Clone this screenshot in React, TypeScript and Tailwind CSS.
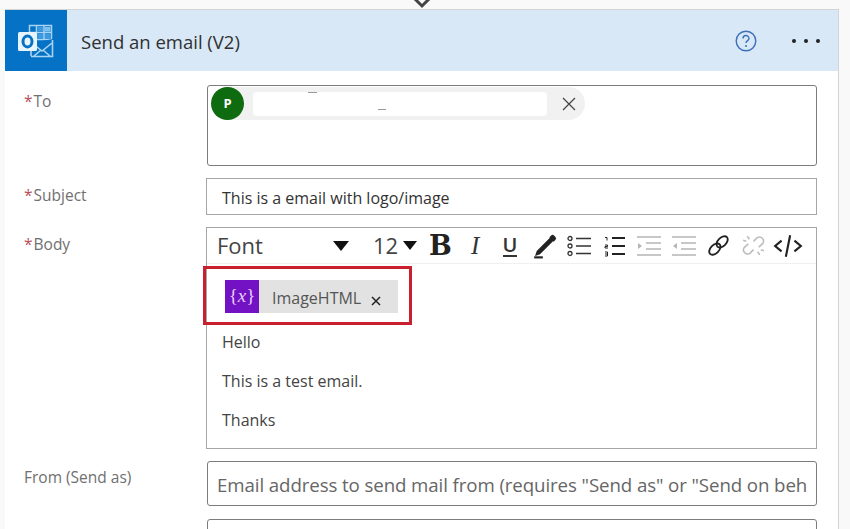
import React from "react";

const font = { fontFamily: '"Open Sans","Noto Sans",sans-serif' };

function Outlook() {
  return (
    <svg width="40" height="40" viewBox="0 0 40 40" fill="none">
      <rect x="13.500" y="4.500" width="22" height="14" fill="none" stroke="#a9d3f2" strokeWidth="1.500" />
      <path d="M20.500 5v14M28 5v14M14 11.500h21" stroke="#a9d3f2" strokeWidth="1.500" />
      <rect x="21.500" y="6" width="5.500" height="4.500" fill="#3c9ae0" />
      <rect x="29" y="6" width="5.500" height="4.500" fill="#7cc0ef" />
      <rect x="21.500" y="12.500" width="5.500" height="5.500" fill="#3c9ae0" />
      <rect x="29" y="12.500" width="5.500" height="5.500" fill="#3c9ae0" />
      <path d="M15 22v14h22V18" fill="#0672c6" />
      <path d="M15 35V22M36.500 19v16.500H15M16 22l10 8 10-8M18 35l7-6M34 35l-7-6" stroke="#a9d3f2" strokeWidth="1.600" />
      <rect x="2" y="11" width="19" height="19" rx="1.500" fill="#e8f4fc" />
      <ellipse cx="11.500" cy="20.500" rx="4.500" ry="5.500" fill="none" stroke="#0672c6" strokeWidth="3" />
    </svg>
  );
}

function Label({ text, req = true }: { text: string; req?: boolean }) {
  return (
    <div className="w-[183px] shrink-0 pl-[19px] text-[15.500px] leading-[22px] text-[#707070]">
      {req && <span className="mr-[1px] text-[#b5525a]">*</span>}
      {text}
    </div>
  );
}

const ink = "#222222";
const grey = "#b5b5b5";

function ToolBtn({ children }: { children: React.ReactNode }) {
  return <div className="flex h-[35px] w-[34.800px] shrink-0 items-center justify-center bg-white">{children}</div>;
}

function Toolbar() {
  return (
    <div className="flex h-[36px] items-start border-b border-[#f0f0f0] pl-[1px]">
      <div className="flex h-[35px] w-[156px] items-center justify-between pl-[9px] pr-[15px] text-[22px] text-[#444444]">
        <span>Font</span>
        <svg width="16" height="10" viewBox="0 0 16 10"><path d="M0 0h16L8 10z" fill="#111" /></svg>
      </div>
      <div className="flex h-[35px] w-[59px] items-center gap-[5px] pl-[9px] text-[22px] text-[#444444]">
        <span>12</span>
        <svg width="14" height="9" viewBox="0 0 14 9"><path d="M0 0h14L7 9z" fill="#111" /></svg>
      </div>
      <ToolBtn>
        <span className="pt-[1px] text-[27px] leading-[30px] font-bold text-[#222222] [font-family:'DejaVu_Serif',serif]">B</span>
      </ToolBtn>
      <ToolBtn>
        <span className="text-[25px] italic text-[#333333] [font-family:'Liberation_Serif',serif]">I</span>
      </ToolBtn>
      <ToolBtn>
        <span className="border-b-2 border-[#333333] text-[20px] leading-[21px] font-semibold text-[#333333]">U</span>
      </ToolBtn>
      <ToolBtn>
        <svg width="26" height="26" viewBox="0 0 24 24" fill="none">
          <path d="M4 20l3-1L19 7l-2-2L5 17z" fill="#222" stroke="#222" strokeWidth="1.500" />
          <path d="M16 4l1.500-1.500a2 2 0 013 0l1 1a2 2 0 010 3L20 8z" fill="#222" />
          <path d="M2 22.500h8" stroke="#222" strokeWidth="2" />
        </svg>
      </ToolBtn>
      <ToolBtn>
        <svg width="26" height="22" viewBox="0 0 26 22" fill="none" stroke="#333">
          <circle cx="3" cy="3.500" r="2" strokeWidth="1.300" />
          <circle cx="3" cy="11" r="2" strokeWidth="1.300" />
          <circle cx="3" cy="18.500" r="2" strokeWidth="1.300" />
          <path d="M9 3.500h15M9 11h15M9 18.500h15" strokeWidth="1.500" />
        </svg>
      </ToolBtn>
      <ToolBtn>
        <svg width="24" height="22" viewBox="0 0 24 22" fill="none" stroke="#222">
          <path d="M3 2.500h2v3M3 10h2.500v1.500H3V13h3M3 17h2.500v4H3M3 19h2.500" strokeWidth="1" />
          <path d="M10 3h13M10 11h13M10 19h13" strokeWidth="2" />
        </svg>
      </ToolBtn>
      <ToolBtn>
        <svg width="26" height="22" viewBox="0 0 26 22" fill="none" stroke={grey}>
          <path d="M1 2h24M10 8h15M10 14h15M1 20h24" strokeWidth="1.500" />
          <path d="M2 8l4 3-4 3z" fill={grey} stroke="none" />
        </svg>
      </ToolBtn>
      <ToolBtn>
        <svg width="26" height="22" viewBox="0 0 26 22" fill="none" stroke={grey}>
          <path d="M1 2h24M10 8h15M10 14h15M1 20h24" strokeWidth="1.500" />
          <path d="M6 8l-4 3 4 3z" fill={grey} stroke="none" />
        </svg>
      </ToolBtn>
      <ToolBtn>
        <svg width="25" height="25" viewBox="0 0 24 24" fill="none" stroke="#222" strokeWidth="1.800">
          <ellipse cx="15.500" cy="8.500" rx="6.500" ry="4" transform="rotate(-45 15.500 8.500)" />
          <ellipse cx="8.500" cy="15.500" rx="6.500" ry="4" transform="rotate(-45 8.500 15.500)" />
        </svg>
      </ToolBtn>
      <ToolBtn>
        <svg width="25" height="25" viewBox="0 0 24 24" fill="none" stroke="#bcbcbc" strokeWidth="1.500">
          <path d="M12 8l3.500-3.500a4 4 0 015.500 5.500L17 13.500" />
          <path d="M12 16l-3.500 3.500A4 4 0 013 14l4-3.500" />
          <path d="M6 3l2 3M2 7l3 1M18 21l-2-3M22 17l-3-1" />
        </svg>
      </ToolBtn>
      <ToolBtn>
        <svg width="30" height="26" viewBox="0 0 28 24" fill="none" stroke={ink} strokeWidth="2">
          <path d="M8 7l-6 5 6 5M20 7l6 5-6 5M16 2l-4 20" />
        </svg>
      </ToolBtn>
    </div>
  );
}

export default function App() {
  return (
    <div className="relative h-[529px] w-[850px] overflow-hidden bg-[#f9f9f9] pl-[5px] pt-[9px] text-[16px]" style={font}>
      <svg className="absolute left-[412px] top-0" width="20" height="9" viewBox="0 0 20 9" fill="none">
        <path d="M2 -2l8 8 8-8" stroke="#444" strokeWidth="3" />
      </svg>

      <div className="h-[530px] w-[834px] border-r border-t border-[#d4d4d4] bg-white">
        <header className="flex h-[61px] items-center bg-[#d8e8f7]">
          <div className="flex h-[61px] w-[62px] items-center justify-center bg-[#0672c6]">
            <Outlook />
          </div>
          <h1 className="ml-[14px] flex-1 pt-[3px] text-[18.500px] text-[#303030]">Send an email (V2)</h1>
          <svg className="mr-[35px]" width="22" height="22" viewBox="0 0 22 22" fill="none">
            <circle cx="11" cy="11" r="9.800" stroke="#3c6fb8" strokeWidth="1.400" />
            <path d="M8 8.500a3 3 0 116 0c0 2-3 2.300-3 4.500" stroke="#3c6fb8" strokeWidth="1.400" />
            <circle cx="11" cy="16" r="1" fill="#3c6fb8" />
          </svg>
          <div className="mr-[18px] flex gap-[8px]">
            <span className="h-[4px] w-[4px] rounded-full bg-[#222222]" />
            <span className="h-[4px] w-[4px] rounded-full bg-[#222222]" />
            <span className="h-[4px] w-[4px] rounded-full bg-[#222222]" />
          </div>
        </header>

        <div className="flex pt-[14px]">
          <div className="pt-[5px]"><Label text="To" /></div>
          <div className="ml-[19px] h-[81px] w-[610px] rounded-[3px] border border-[#7c7c7c] pl-[3px] pt-[1px]">
            <div className="flex h-[33px] w-[374px] items-center rounded-full bg-[#f1f1f1]">
              <div className="flex h-[33px] w-[33px] shrink-0 items-center justify-center rounded-full bg-[#0f6b0f] text-[13px] font-bold text-white">P</div>
              <div className="relative ml-[9px] h-[24px] w-[294px] rounded-[4px] bg-white">
                <span className="absolute left-[55px] top-[0px] h-[1px] w-[9px] bg-[#999999]" />
                <span className="absolute left-[125px] top-[17px] h-[1px] w-[8px] bg-[#999999]" />
              </div>
              <svg className="ml-[15px]" width="14" height="14" viewBox="0 0 14 14" stroke="#444" strokeWidth="1.200">
                <path d="M1 1l12 12M13 1L1 13" />
              </svg>
            </div>
          </div>
        </div>

        <div className="flex pt-[12px]">
          <div className="pt-[6px]"><Label text="Subject" /></div>
          <div className="ml-[18px] flex h-[37px] w-[611px] items-center border border-[#a6a6a6] pl-[15px] pt-[3px] text-[16px] text-[#333333]">
            This is a email with logo/image
          </div>
        </div>

        <div className="flex pt-[12px]">
          <div className="pt-[6px]"><Label text="Body" /></div>
          <div className="ml-[18px] h-[222px] w-[611px] border border-[#a6a6a6]">
            <Toolbar />
            <div className="relative h-[184px] pl-[15px] pt-[16px]">
              <div className="absolute left-[-4px] top-[2px] h-[59px] w-[209px] border-[3px] border-[#c8202f]" />
              <div className="ml-[3px] flex h-[33px] w-[173px] items-center bg-[#e2e2e2]">
                <div className="flex h-[33px] w-[34px] shrink-0 items-center justify-center bg-[#7212c4] text-[19px] text-[#e5d0f7] [font-family:'Liberation_Serif',serif]">
                  <span>{"{"}<i>x</i>{"}"}</span>
                </div>
                <span className="ml-[13px] pt-[3px] text-[16px] text-[#555555]">ImageHTML</span>
                <svg className="ml-[10px] mt-[8px]" width="10" height="10" viewBox="0 0 10 10" stroke="#222" strokeWidth="1.500">
                  <path d="M1 1l8 8M9 1L1 9" />
                </svg>
              </div>
              <div className="flex flex-col gap-[17px] pt-[18px] text-[16px] leading-[22px] text-[#444444]">
                <p>Hello</p>
                <p>This is a test email.</p>
                <p>Thanks</p>
              </div>
            </div>
          </div>
        </div>

        <div className="flex pt-[12px]">
          <div className="pt-[5px]"><Label text="From (Send as)" req={false} /></div>
          <div className="ml-[19px] flex h-[45px] w-[610px] items-center rounded-[3px] border border-[#7c7c7c] pl-[9px] pt-[3px] text-[18.700px] tracking-[-0.100px] whitespace-nowrap text-[#666666]">
            Email address to send mail from (requires "Send as" or "Send on beh
          </div>
        </div>

        <div className="ml-[202px] mt-[13px] h-[40px] w-[610px] rounded-[3px] border border-[#7c7c7c]" />
      </div>
    </div>
  );
}
